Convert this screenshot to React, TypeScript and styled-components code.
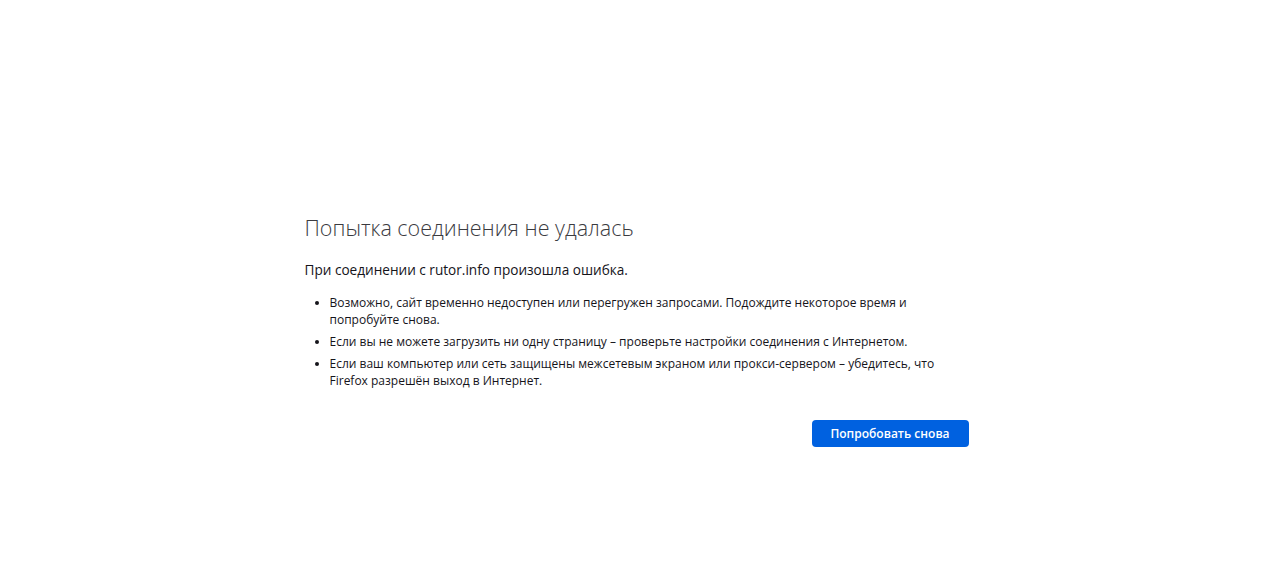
import React from "react";
import styled, { createGlobalStyle } from "styled-components";

const GlobalStyle = createGlobalStyle`
  html, body {
    margin: 0;
    padding: 0;
    background: #ffffff;
  }
  body {
    font-family: "Open Sans", "Noto Sans", sans-serif;
    color: #15141a;
  }
`;

const Page = styled.div`
  min-height: 567px;
  display: flex;
  justify-content: center;
  padding-top: 212px;
  box-sizing: border-box;
`;

const Container = styled.div`
  width: 664px;
  margin-left: -7px;
`;

const Title = styled.h1`
  margin: 0;
  font-size: 21.5px;
  font-weight: 300;
  line-height: 32px;
  color: #3b3b3f;
`;

const Description = styled.p`
  margin: 16px 0 0;
  font-size: 13.6px;
  line-height: 20px;
  color: #15141a;
`;

const List = styled.ul`
  margin: 14px 0 0;
  padding-left: 25px;
  font-size: 12px;
  line-height: 17px;
  color: #15141a;
`;

const Item = styled.li`
  margin-bottom: 5px;
  padding-left: 0;
`;

const ButtonRow = styled.div`
  display: flex;
  justify-content: flex-end;
  margin-top: 31px;
`;

const Button = styled.button`
  height: 27px;
  width: 157px;
  padding: 0;
  border: none;
  border-radius: 4px;
  background: #0061e0;
  color: #ffffff;
  font-family: "Open Sans", "Noto Sans", sans-serif;
  font-size: 12px;
  font-weight: 600;
  cursor: pointer;
`;

const App = () => {
  return (
    <>
      <GlobalStyle />
      <Page>
        <Container>
          <Title>Попытка соединения не удалась</Title>
          <Description>При соединении с rutor.info произошла ошибка.</Description>
          <List>
            <Item>
              Возможно, сайт временно недоступен или перегружен запросами. Подождите некоторое время и
              попробуйте снова.
            </Item>
            <Item>
              Если вы не можете загрузить ни одну страницу – проверьте настройки соединения с Интернетом.
            </Item>
            <Item>
              Если ваш компьютер или сеть защищены межсетевым экраном или прокси-сервером – убедитесь, что
              Firefox разрешён выход в Интернет.
            </Item>
          </List>
          <ButtonRow>
            <Button>Попробовать снова</Button>
          </ButtonRow>
        </Container>
      </Page>
    </>
  );
};

export default App;
